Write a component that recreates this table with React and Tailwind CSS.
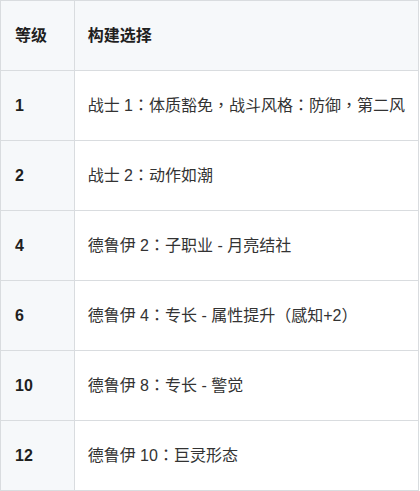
import React from "react";

const rows = [
  ["1", "战士 1：体质豁免，战斗风格：防御，第二风"],
  ["2", "战士 2：动作如潮"],
  ["4", "德鲁伊 2：子职业 - 月亮结社"],
  ["6", "德鲁伊 4：专长 - 属性提升（感知+2）"],
  ["10", "德鲁伊 8：专长 - 警觉"],
  ["12", "德鲁伊 10：巨灵形态"],
];

export default function App() {
  return (
    <div
      className="w-[420px] h-[491px] bg-white overflow-hidden"
      style={{ fontFamily: '"Liberation Sans", "Noto Sans CJK TC", sans-serif' }}
    >
      <table className="w-[419px] border-collapse border border-[#d9dcdf] text-[16px] leading-none">
        <thead>
          <tr className="h-[70px] bg-[#f6f8fa]">
            <th className="w-[75px] border border-[#d9dcdf] px-[14px] text-left font-bold text-[#1f1f1f]">等级</th>
            <th className="border border-[#d9dcdf] px-[13px] text-left font-bold text-[#1f1f1f]">构建选择</th>
          </tr>
        </thead>
        <tbody>
          {rows.map(([lv, text]) => (
            <tr key={lv} className="h-[70px]">
              <td className="border border-[#d9dcdf] bg-[#f6f8fa] px-[14px] font-bold text-[#1f1f1f]">{lv}</td>
              <td className="border border-[#d9dcdf] bg-white px-[13px] text-[#333333] whitespace-nowrap">{text}</td>
            </tr>
          ))}
        </tbody>
      </table>
    </div>
  );
}
